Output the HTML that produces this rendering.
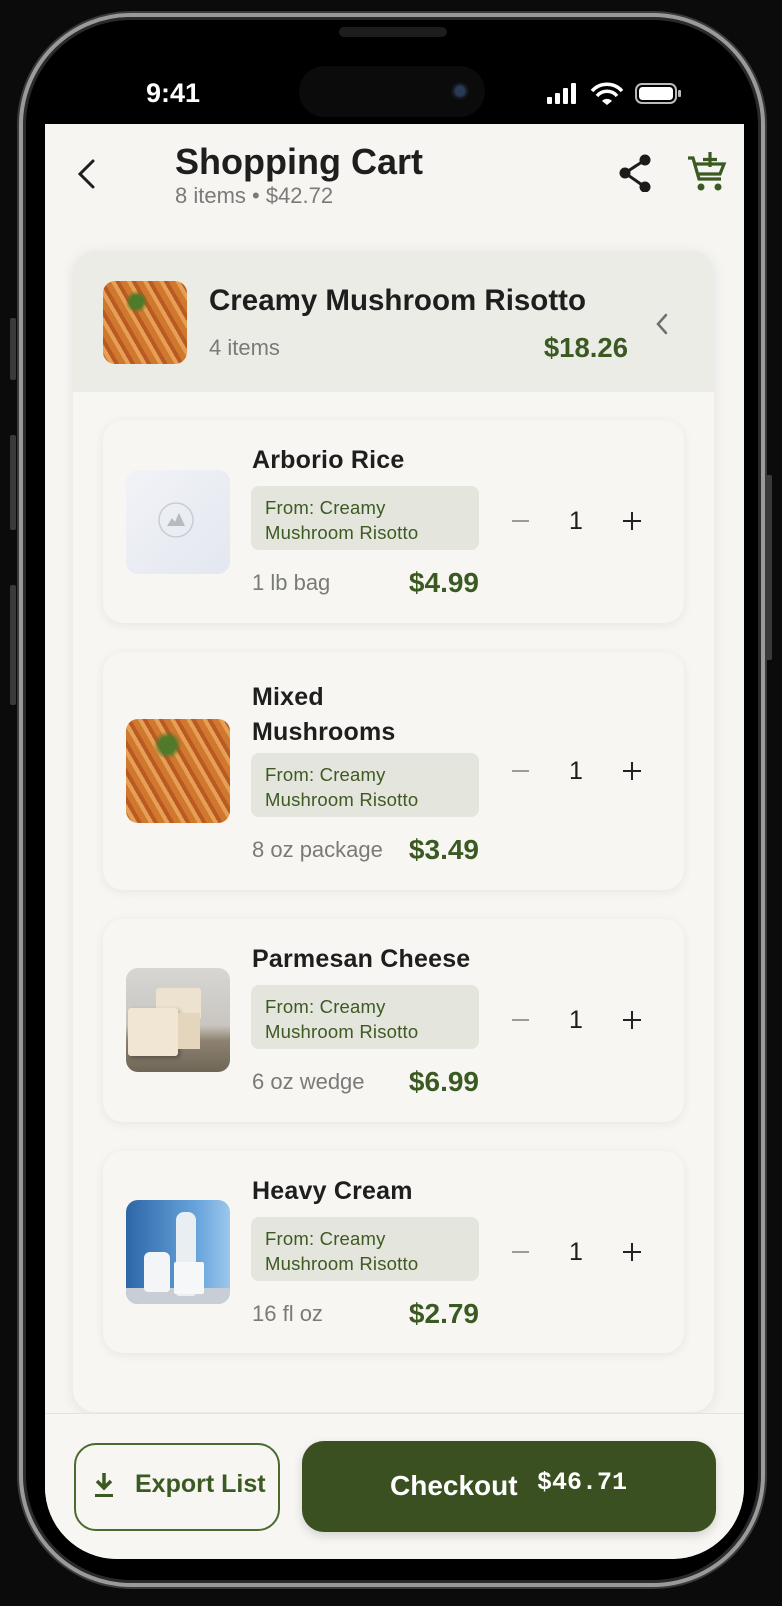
<!DOCTYPE html>
<html><head><meta charset="utf-8"><style>
*{margin:0;padding:0;box-sizing:border-box}
body{width:782px;height:1606px;background:#0b0b0b;position:relative;overflow:hidden;font-family:"Liberation Sans",sans-serif}
.abs{position:absolute}
.frame{left:19px;top:13px;width:746px;height:1574px;border-radius:112px;background:#000;border:4px solid #9a9a98;box-shadow:0 0 0 2px #3a3a3a, inset 0 0 0 3px #2a2a2a}
.btn{background:#3a3a3a;border-radius:2px;width:6px}
.screen{left:45px;top:124px;width:699px;height:1435px;background:#f6f5f2;border-radius:0 0 72px 72px;overflow:hidden}
.t{position:absolute;white-space:nowrap;line-height:1}
.card{position:absolute;left:58px;width:581px;background:#f7f6f3;border-radius:20px;box-shadow:0 2px 10px rgba(0,0,0,0.07)}
.thumb{position:absolute;left:23px;width:104px;height:104px;border-radius:12px;overflow:hidden}
.name{left:149px;font-size:25px;font-weight:bold;color:#1e1e1e;letter-spacing:0.2px}
.tag{position:absolute;left:148px;width:228px;height:64px;background:#e4e5dd;border-radius:8px;padding:9px 0 0 14px;font-size:18.5px;line-height:25px;color:#3d5a22;letter-spacing:0.2px}
.sz{left:149px;font-size:22px;color:#7a7a78}
.pr{right:205px;font-size:28px;font-weight:bold;color:#3b5a22}
.minus{position:absolute;left:409px;width:17px;height:2px;background:#9b9b98}
.qty{position:absolute;left:466px;font-size:25px;color:#1e1e1e;line-height:1}
.plus{position:absolute;left:520px;width:18px;height:18px}
.plus:before{content:"";position:absolute;left:0;top:8px;width:18px;height:2px;background:#222}
.plus:after{content:"";position:absolute;left:8px;top:0;width:2px;height:18px;background:#222}
.pasta{background:radial-gradient(circle at 40% 25%,#4f7a2a 0 8%,transparent 14%),repeating-linear-gradient(60deg,#d0782e 0 6px,#e6a055 6px 10px,#b85a22 10px 14px),#cf7a35}
</style></head><body>
<div class="abs btn" style="left:10px;top:318px;height:62px"></div>
<div class="abs btn" style="left:10px;top:435px;height:95px"></div>
<div class="abs btn" style="left:10px;top:585px;height:120px"></div>
<div class="abs btn" style="left:766px;top:475px;height:185px"></div>
<div class="abs frame"></div>
<div class="abs" style="left:339px;top:27px;width:108px;height:10px;border-radius:5px;background:#1d1d1d"></div>
<div class="abs" style="left:299px;top:66px;width:186px;height:51px;border-radius:26px;background:#0b0b0c"></div>
<div class="abs" style="left:451px;top:82px;width:18px;height:18px;border-radius:50%;background:radial-gradient(circle,#2a3a55 0 35%,#101418 60%)"></div>
<div class="t" style="left:146px;top:80px;font-size:27px;font-weight:bold;color:#fff">9:41</div>
<svg class="abs" style="left:545px;top:82px" width="140" height="24" viewBox="0 0 140 24">
<rect x="2" y="15" width="5" height="7" rx="1" fill="#fff"/><rect x="10" y="11" width="5" height="11" rx="1" fill="#fff"/><rect x="18" y="6" width="5" height="16" rx="1" fill="#fff"/><rect x="26" y="1" width="5" height="21" rx="1" fill="#fff"/>
<path d="M47 9 A20 20 0 0 1 77 9" stroke="#fff" stroke-width="3.5" fill="none"/><path d="M52 14 A13 13 0 0 1 72 14" stroke="#fff" stroke-width="3.5" fill="none"/><path d="M57 19 L62 23 L67 19 A7 7 0 0 0 57 19Z" fill="#fff"/>
<rect x="91" y="2" width="40" height="19" rx="6" stroke="#bbb" stroke-width="2" fill="none"/><rect x="94" y="5" width="34" height="13" rx="3.5" fill="#fff"/><rect x="133" y="8" width="3" height="7" rx="1" fill="#bbb"/>
</svg>
<div class="abs screen">
  <svg class="abs" style="left:30px;top:34px" width="24" height="32" viewBox="0 0 24 32"><path d="M18 3 L5 16 L18 29" stroke="#1e1e1e" stroke-width="3" fill="none" stroke-linecap="round"/></svg>
  <div class="t" style="left:130px;top:20px;font-size:36px;font-weight:bold;color:#1e1e1e">Shopping Cart</div>
  <div class="t" style="left:130px;top:61px;font-size:22px;color:#7a7a78">8 items • $42.72</div>
  <svg class="abs" style="left:572px;top:28px" width="40" height="40" viewBox="0 0 40 40"><g fill="#1b1b1b"><circle cx="28" cy="8" r="5.5"/><circle cx="8" cy="21" r="5.5"/><circle cx="28" cy="35" r="5.5"/></g><path d="M28 8 L8 21 L28 35" stroke="#1b1b1b" stroke-width="3" fill="none"/></svg>
  <svg class="abs" style="left:641px;top:26px" width="42" height="42" viewBox="0 0 42 42"><g fill="none" stroke="#3b5a22" stroke-width="3.2"><path d="M2 8 H7 L13 29 H35"/><path d="M9 14 H38 L34 24 H12"/><path d="M24 2 V17 M17 9.5 H31"/></g><circle cx="15" cy="37" r="3.5" fill="#3b5a22"/><circle cx="32" cy="37" r="3.5" fill="#3b5a22"/></svg>

  <div class="abs" style="left:28px;top:127px;width:641px;height:1161px;background:#f7f6f3;border-radius:22px;box-shadow:0 2px 14px rgba(0,0,0,0.08);overflow:hidden">
    <div class="abs" style="left:0;top:0;width:641px;height:141px;background:#ecece7"></div>
    <div class="abs pasta" style="left:30px;top:30px;width:84px;height:83px;border-radius:12px"></div>
    <div class="t" style="left:136px;top:35px;font-size:29.5px;font-weight:bold;color:#1e1e1e">Creamy Mushroom Risotto</div>
    <div class="t" style="left:136px;top:86px;font-size:22px;color:#7a7a78">4 items</div>
    <div class="t" style="right:86px;top:83px;font-size:27.5px;font-weight:bold;color:#3b5a22">$18.26</div>
    <svg class="abs" style="left:581px;top:62px" width="16" height="22" viewBox="0 0 16 22"><path d="M12 2 L4 11 L12 20" stroke="#6e6e6e" stroke-width="2.5" fill="none" stroke-linecap="round"/></svg>

    <div class="card" style="top:169px;height:203px;left:30px">
      <div class="thumb" style="top:50px;background:linear-gradient(135deg,#f1f3f7,#e3e7ef)"><svg width="104" height="104" viewBox="0 0 104 104"><circle cx="50" cy="50" r="17" stroke="#c9ccd2" stroke-width="1.5" fill="none"/><path d="M41 56 L46 48 L49 52 L53 43 L59 56Z" fill="#b7bac0"/></svg></div>
      <div class="t name" style="top:28px">Arborio Rice</div>
      <div class="tag" style="top:66px">From: Creamy<br>Mushroom Risotto</div>
      <div class="t sz" style="top:152px">1 lb bag</div>
      <div class="t pr" style="top:149px">$4.99</div>
      <div class="minus" style="top:100px"></div><div class="qty" style="top:89px">1</div><div class="plus" style="top:92px"></div>
    </div>
    <div class="card" style="top:401px;height:238px;left:30px">
      <div class="thumb pasta" style="top:67px"></div>
      <div class="t name" style="top:28px;line-height:35px;white-space:normal">Mixed<br>Mushrooms</div>
      <div class="tag" style="top:101px">From: Creamy<br>Mushroom Risotto</div>
      <div class="t sz" style="top:187px">8 oz package</div>
      <div class="t pr" style="top:184px">$3.49</div>
      <div class="minus" style="top:118px"></div><div class="qty" style="top:107px">1</div><div class="plus" style="top:110px"></div>
    </div>
    <div class="card" style="top:668px;height:203px;left:30px">
      <div class="thumb" style="top:49px;background:linear-gradient(180deg,#d7d6d3 0,#c9c6c1 55%,#8d8270 70%,#6f6657 100%)"><div class="abs" style="left:30px;top:20px;width:45px;height:32px;background:#ece2cf;border-radius:3px"></div><div class="abs" style="left:2px;top:40px;width:50px;height:48px;background:#f0e6d3;border-radius:3px;box-shadow:2px 2px 4px rgba(0,0,0,.3)"></div><div class="abs" style="left:52px;top:45px;width:22px;height:36px;background:#e3d6bd"></div></div>
      <div class="t name" style="top:28px">Parmesan Cheese</div>
      <div class="tag" style="top:66px">From: Creamy<br>Mushroom Risotto</div>
      <div class="t sz" style="top:152px">6 oz wedge</div>
      <div class="t pr" style="top:149px">$6.99</div>
      <div class="minus" style="top:100px"></div><div class="qty" style="top:89px">1</div><div class="plus" style="top:92px"></div>
    </div>
    <div class="card" style="top:900px;height:202px;left:30px">
      <div class="thumb" style="top:49px;background:linear-gradient(90deg,#2d67a8,#6aa6dc 70%,#9cc7ec)"><div class="abs" style="left:0;top:88px;width:104px;height:16px;background:#c9ced6"></div><div class="abs" style="left:50px;top:12px;width:20px;height:84px;background:#e9eef3;border-radius:8px 8px 3px 3px"></div><div class="abs" style="left:18px;top:52px;width:26px;height:40px;background:#f3f5f7;border-radius:6px 6px 4px 4px"></div><div class="abs" style="left:48px;top:62px;width:30px;height:32px;background:#f6f7f8;border-radius:2px"></div></div>
      <div class="t name" style="top:28px">Heavy Cream</div>
      <div class="tag" style="top:66px">From: Creamy<br>Mushroom Risotto</div>
      <div class="t sz" style="top:152px">16 fl oz</div>
      <div class="t pr" style="top:149px">$2.79</div>
      <div class="minus" style="top:100px"></div><div class="qty" style="top:89px">1</div><div class="plus" style="top:92px"></div>
    </div>
  </div>

  <div class="abs" style="left:0;top:1289px;width:699px;height:146px;background:#f7f6f3;border-top:1px solid #e4e3de"></div>
  <div class="abs" style="left:29px;top:1319px;width:206px;height:88px;border:2px solid #4a6a2e;border-radius:22px"></div>
  <svg class="abs" style="left:48px;top:1347px" width="22" height="28" viewBox="0 0 22 28"><path d="M11 2 V16 M4 10 L11 17 L18 10" stroke="#3b5a22" stroke-width="3.5" fill="none"/><rect x="2" y="23" width="18" height="3" fill="#3b5a22"/></svg>
  <div class="t" style="left:90px;top:1348px;font-size:25px;font-weight:bold;color:#3b5a22">Export List</div>
  <div class="abs" style="left:257px;top:1317px;width:414px;height:91px;background:#3a5020;border-radius:22px;box-shadow:0 4px 10px rgba(0,0,0,0.15)"></div>
  <div class="t" style="left:345px;top:1348px;font-size:28px;font-weight:bold;color:#fff">Checkout</div>
  <div class="t" style="left:492px;top:1346px;font-size:25px;font-weight:bold;color:#fff;font-family:'Liberation Mono',monospace">$46.71</div>
</div>
</body></html>
